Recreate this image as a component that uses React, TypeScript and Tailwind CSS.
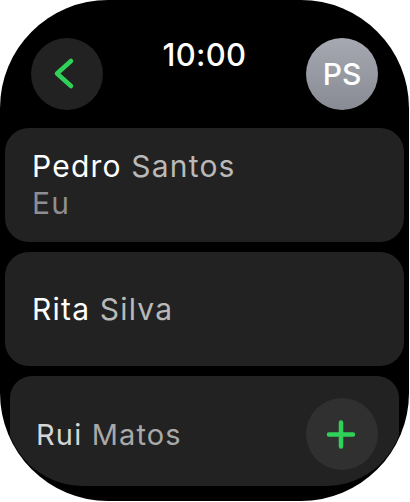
import React from "react";

const font = { fontFamily: "Inter, 'Noto Sans', sans-serif" };

const ContactCard = ({
  first,
  last,
  note,
  children,
  dim,
}: {
  first: string;
  last: string;
  note?: string;
  children?: React.ReactNode;
  dim?: boolean;
}) => (
  <div
    className={
      dim
        ? "mx-[5px] flex h-[114px] shrink-0 items-center justify-between rounded-[22px] bg-[#222222] pl-[26px] pr-[21px] pt-[2px]"
        : "flex h-[114px] shrink-0 items-center justify-between rounded-[24px] bg-[#222222] pl-[27px] pr-[21px]"
    }
  >
    <div className="flex flex-col">
      <p className={dim ? "text-[29px] leading-[37px] tracking-[0.04em]" : "text-[30px] leading-[37px] tracking-[0.04em]"}>
        <span className={dim ? "text-[#d6d6d6]" : "text-white"}>{first}</span>{" "}
        <span className={dim ? "text-[#a9a9a9]" : "text-[#b9b9b9]"}>{last}</span>
      </p>
      {note && <p className="text-[30px] leading-[37px] tracking-[0.04em] text-[#8e8e93]">{note}</p>}
    </div>
    {children}
  </div>
);

export default function App() {
  return (
    <div className="h-[502px] w-[410px] bg-white" style={font}>
      <div className="flex h-[501px] w-[409px] flex-col overflow-hidden rounded-[108px] bg-black">
        {/* header */}
        <div className="flex items-start justify-between px-[31px] pt-[38px]">
          <button className="h-[72px] w-[72px] rounded-full bg-[#222222]">
            <svg width="72" height="72" viewBox="0 0 72 72" fill="none">
              <path
                d="M40 23 L26 35.5 L40 48"
                stroke="#30d158"
                strokeWidth="4.5"
                strokeLinecap="round"
                strokeLinejoin="round"
              />
            </svg>
          </button>
          <div className="pt-[1px] text-[31px] font-medium leading-none tracking-[0.01em] text-white">10:00</div>
          <div className="flex h-[72px] w-[72px] items-center justify-center rounded-full bg-gradient-to-b from-[#a6a9b1] to-[#888b93] text-[30px] font-medium text-white">
            PS
          </div>
        </div>

        {/* list */}
        <div className="mx-[5px] mt-[18px] flex h-[358px] flex-col gap-[10px] overflow-hidden rounded-b-[78px]">
          <ContactCard first="Pedro" last="Santos" note="Eu" />
          <ContactCard first="Rita" last="Silva" />
          <ContactCard first="Rui" last="Matos" dim>
            <button className="h-[72px] w-[72px] shrink-0 rounded-full bg-[#303030]">
              <svg width="72" height="72" viewBox="0 0 72 72" fill="none">
                <path
                  d="M23 36.5 H47 M35 24.5 V48.5"
                  stroke="#30d158"
                  strokeWidth="4.5"
                  strokeLinecap="round"
                />
              </svg>
            </button>
          </ContactCard>
        </div>
      </div>
    </div>
  );
}
